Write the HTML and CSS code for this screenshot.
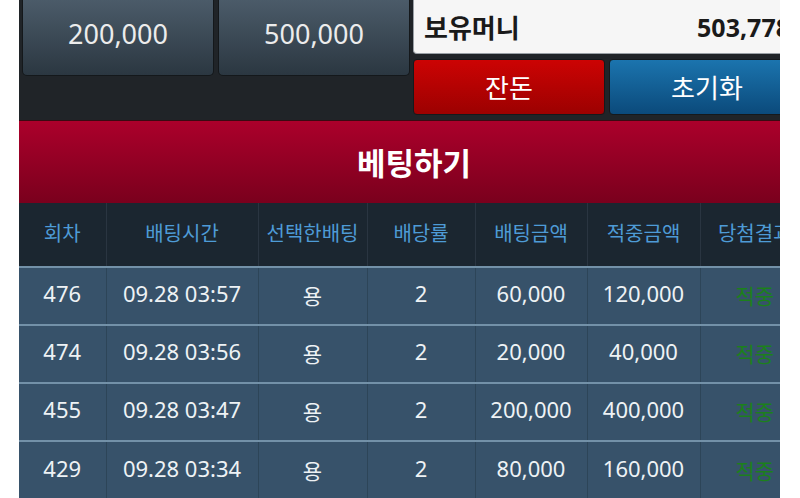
FILE: index.html
```html
<!DOCTYPE html>
<html lang="ko">
<head>
<meta charset="utf-8">
<title>베팅</title>
<link rel="stylesheet" href="styles.css">
</head>
<body>
<div class="viewport">
  <div class="page">
    <div class="top">
      <div class="quick">
        <button class="chip">200,000</button>
        <button class="chip">500,000</button>
      </div>
      <div class="wallet">
        <div class="money">
          <span class="money-label">보유머니</span>
          <span class="money-value">503,778</span>
        </div>
        <div class="actions">
          <button class="act act-red">잔돈</button>
          <button class="act act-blue">초기화</button>
        </div>
      </div>
    </div>
    <div class="banner">베팅하기</div>
    <table class="bets">
      <colgroup>
        <col class="c1"><col class="c2"><col class="c3"><col class="c4"><col class="c5"><col class="c6"><col class="c7">
      </colgroup>
      <thead>
        <tr>
          <th>회차</th><th>배팅시간</th><th>선택한배팅</th><th>배당률</th><th>배팅금액</th><th>적중금액</th><th>당첨결과</th>
        </tr>
      </thead>
      <tbody>
        <tr><td>476</td><td>09.28 03:57</td><td class="ko">용</td><td>2</td><td>60,000</td><td>120,000</td><td class="win">적중</td></tr>
        <tr><td>474</td><td>09.28 03:56</td><td class="ko">용</td><td>2</td><td>20,000</td><td>40,000</td><td class="win">적중</td></tr>
        <tr><td>455</td><td>09.28 03:47</td><td class="ko">용</td><td>2</td><td>200,000</td><td>400,000</td><td class="win">적중</td></tr>
        <tr><td>429</td><td>09.28 03:34</td><td class="ko">용</td><td>2</td><td>80,000</td><td>160,000</td><td class="win">적중</td></tr>
      </tbody>
    </table>
  </div>
</div>
</body>
</html>
```

FILE: styles.css
```css
* { box-sizing: border-box; }

html, body {
  margin: 0;
  padding: 0;
  background: #ffffff;
}

body {
  font-family: "Noto Sans", "Noto Sans CJK KR", sans-serif;
}

.viewport {
  margin-left: 19px;
  width: 761px;
  height: 498px;
  overflow: hidden;
}

.page {
  width: 790px;
  background: #37526a;
}

.top {
  display: flex;
  gap: 3px;
  height: 120px;
  padding-left: 3px;
  padding-right: 4px;
  background: #202428;
}

.quick {
  display: flex;
  gap: 4px;
}

.chip {
  width: 192px;
  height: 76px;
  border: 1px solid #14181b;
  border-top: none;
  border-radius: 0 0 5px 5px;
  background: linear-gradient(#4b5b69, #2b3741);
  color: #ececec;
  font-family: "Noto Sans", sans-serif;
  font-size: 27px;
  padding: 0 0 8px;
}

.wallet {
  flex: 1;
  display: flex;
  flex-direction: column;
  gap: 5px;
}

.money {
  height: 54px;
  display: flex;
  align-items: center;
  justify-content: space-between;
  padding: 0 14px 0 10px;
  background: #f6f6f6;
  border: 1px solid #9aa0a6;
  border-top: none;
  border-radius: 0 0 4px 4px;
  color: #1a1a1a;
  font-weight: 700;
}

.money-label {
  font-size: 26px;
}

.money-value {
  font-size: 25px;
}

.actions {
  display: flex;
  gap: 4px;
}

.act {
  height: 56px;
  border: 1px solid #15191c;
  border-radius: 4px;
  color: #ffffff;
  font-family: "Noto Sans", "Noto Sans CJK KR", sans-serif;
  font-size: 26px;
  padding: 0;
}

.act-red {
  width: 192px;
  background: linear-gradient(#cc0303, #9c0101);
}

.act-blue {
  flex: 1;
  background: linear-gradient(#1b74ae, #0b4a7b);
}

.banner {
  height: 83px;
  display: flex;
  align-items: center;
  justify-content: center;
  background: linear-gradient(#ab002b, #7a001d);
  color: #ffffff;
  font-size: 31px;
  font-weight: 700;
  padding-bottom: 2px;
  border-top: 1px solid #3a0a12;
}

.bets {
  width: 790px;
  table-layout: fixed;
  border-collapse: collapse;
}

.c1 { width: 87px; }
.c2 { width: 152px; }
.c3 { width: 109px; }
.c4 { width: 108px; }
.c5 { width: 112px; }
.c6 { width: 113px; }
.c7 { width: 109px; }

.bets th {
  height: 64px;
  background: #1b2630;
  color: #4e9bd6;
  font-weight: 400;
  font-size: 20px;
  padding: 0 0 4px;
  border-left: 1px solid #2a3541;
  white-space: nowrap;
  overflow: hidden;
}

.bets th:first-child,
.bets td:first-child {
  border-left: none;
}

.bets td {
  height: 58px;
  text-align: center;
  color: #eef2f5;
  font-size: 22px;
  padding: 0 0 6px;
  border-top: 2px solid #7391a8;
  border-left: 1px solid #2d4558;
  white-space: nowrap;
}

.bets td.ko {
  font-size: 21px;
  padding-top: 4px;
}

.bets td.win {
  color: #1c801c;
  font-size: 21px;
  padding-top: 4px;
}
```
